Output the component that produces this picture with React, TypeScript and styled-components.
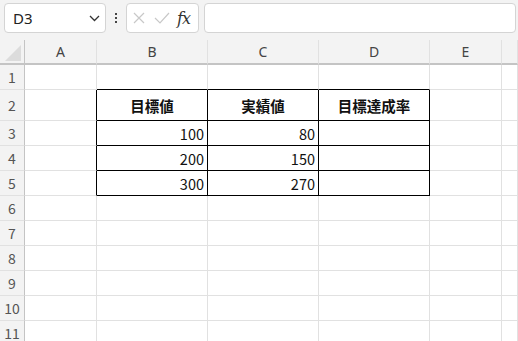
import React from 'react'
import styled, { createGlobalStyle } from 'styled-components'

const GlobalStyle = createGlobalStyle`
  html, body {
    margin: 0;
    padding: 0;
    background: #f3f3f3;
    overflow: hidden;
  }
  * { box-sizing: border-box; }
`

const GRID = '#e1e1e1'
const INK = '#000000'

const Page = styled.div`
  width: 518px;
  height: 341px;
  overflow: hidden;
  font-family: "Noto Sans CJK JP", "Noto Sans", sans-serif;
  background: #f3f3f3;
`

const Toolbar = styled.div`
  display: flex;
  align-items: center;
  height: 40px;
  padding: 3px 2px 7px 4px;
`

const NameBox = styled.div`
  display: flex;
  align-items: center;
  justify-content: space-between;
  width: 102px;
  height: 30px;
  padding: 0 5px 0 8px;
  background: #fff;
  border: 1px solid #d4d4d4;
  border-radius: 4px;
  font-family: "Noto Sans", sans-serif;
  font-size: 15px;
  color: #222;
`

const Dots = styled.div`
  display: flex;
  flex-direction: column;
  gap: 2px;
  margin: 0 9px;
  span {
    width: 2px;
    height: 2px;
    background: #444;
  }
`

const FxBox = styled.div`
  display: flex;
  align-items: center;
  gap: 9px;
  width: 73px;
  height: 30px;
  padding: 0 5px 0 6px;
  background: #fff;
  border: 1px solid #d4d4d4;
  border-radius: 4px;
`

const Fx = styled.span`
  font-family: "DejaVu Serif", "Liberation Serif", serif;
  font-style: italic;
  font-size: 16px;
  color: #333;
  margin-left: -2px;
  letter-spacing: -1px;
`

const FormulaBar = styled.div`
  flex: 1;
  height: 30px;
  margin-left: 5px;
  background: #fff;
  border: 1px solid #d4d4d4;
  border-radius: 4px;
`

const Sheet = styled.div`
  display: grid;
  grid-template-columns: 25px 72px 111px 111px 111px 72px 1fr;
  grid-template-rows: 25px 25px 31px repeat(9, 25px);
  background: #fff;
`

const ColHead = styled.div`
  display: flex;
  align-items: center;
  justify-content: center;
  background: #f3f3f3;
  border-right: 1px solid ${GRID};
  border-bottom: 2px solid #c4c4c4;
  font-family: "Noto Sans", sans-serif;
  font-size: 14px;
  color: #444;
`

const Corner = styled.div`
  position: relative;
  background: #f3f3f3;
  border-right: 1px solid #c4c4c4;
  border-bottom: 2px solid #c4c4c4;
  &::after {
    content: '';
    position: absolute;
    left: 5px;
    top: 5px;
    border-left: 16px solid transparent;
    border-bottom: 16px solid #dcdcdc;
  }
`

const RowHead = styled.div`
  display: flex;
  align-items: center;
  justify-content: center;
  background: #f3f3f3;
  border-right: 1px solid #c4c4c4;
  border-bottom: 1px solid ${GRID};
  font-size: 14px;
  color: #555;
`

const Cell = styled.div<{ $right: string; $bottom: string; $align: string; $bold?: boolean }>`
  display: flex;
  align-items: center;
  justify-content: ${p => p.$align};
  padding: 0 3px;
  border-right: 1px solid ${p => p.$right};
  border-bottom: 1px solid ${p => p.$bottom};
  font-size: 14.5px;
  font-weight: ${p => (p.$bold ? 700 : 400)};
  color: #111;
`

const cols = ['A', 'B', 'C', 'D', 'E', '']

const data: Record<string, string> = {
  B2: '目標値',
  C2: '実績値',
  D2: '目標達成率',
  B3: '100',
  C3: '80',
  B4: '200',
  C4: '150',
  B5: '300',
  C5: '270',
}

// table box B2:D5
const inBox = (c: number, r: number) => c >= 1 && c <= 3 && r >= 2 && r <= 5

export default function App() {
  const rows = Array.from({ length: 11 }, (_, i) => i + 1)
  return (
    <Page>
      <GlobalStyle />
      <Toolbar>
        <NameBox>
          <span>D3</span>
          <svg width="11" height="7" viewBox="0 0 11 7" fill="none" stroke="#333" strokeWidth="1.3">
            <path d="M1 1l4.5 4.5L10 1" />
          </svg>
        </NameBox>
        <Dots>
          <span />
          <span />
          <span />
        </Dots>
        <FxBox>
          <svg width="12" height="12" viewBox="0 0 12 12" stroke="#c8c8c8" strokeWidth="1.2">
            <path d="M1 1l10 10M11 1L1 11" />
          </svg>
          <svg width="16" height="12" viewBox="0 0 16 12" fill="none" stroke="#c8c8c8" strokeWidth="1.2">
            <path d="M1 6l5 5L15 1" />
          </svg>
          <Fx>fx</Fx>
        </FxBox>
        <FormulaBar />
      </Toolbar>
      <Sheet>
        <Corner />
        {cols.map((c, i) => (
          <ColHead key={i}>{c}</ColHead>
        ))}
        {rows.map(r => (
          <React.Fragment key={r}>
            <RowHead>{r}</RowHead>
            {cols.map((c, ci) => {
              const box = inBox(ci, r)
              const right = box || inBox(ci + 1, r) ? INK : GRID
              const bottom = box || inBox(ci, r + 1) ? INK : GRID
              const text = data[c + r]
              const header = r === 2
              return (
                <Cell
                  key={ci}
                  $right={right}
                  $bottom={bottom}
                  $align={header ? 'center' : 'flex-end'}
                  $bold={header}
                >
                  {text}
                </Cell>
              )
            })}
          </React.Fragment>
        ))}
      </Sheet>
    </Page>
  )
}
